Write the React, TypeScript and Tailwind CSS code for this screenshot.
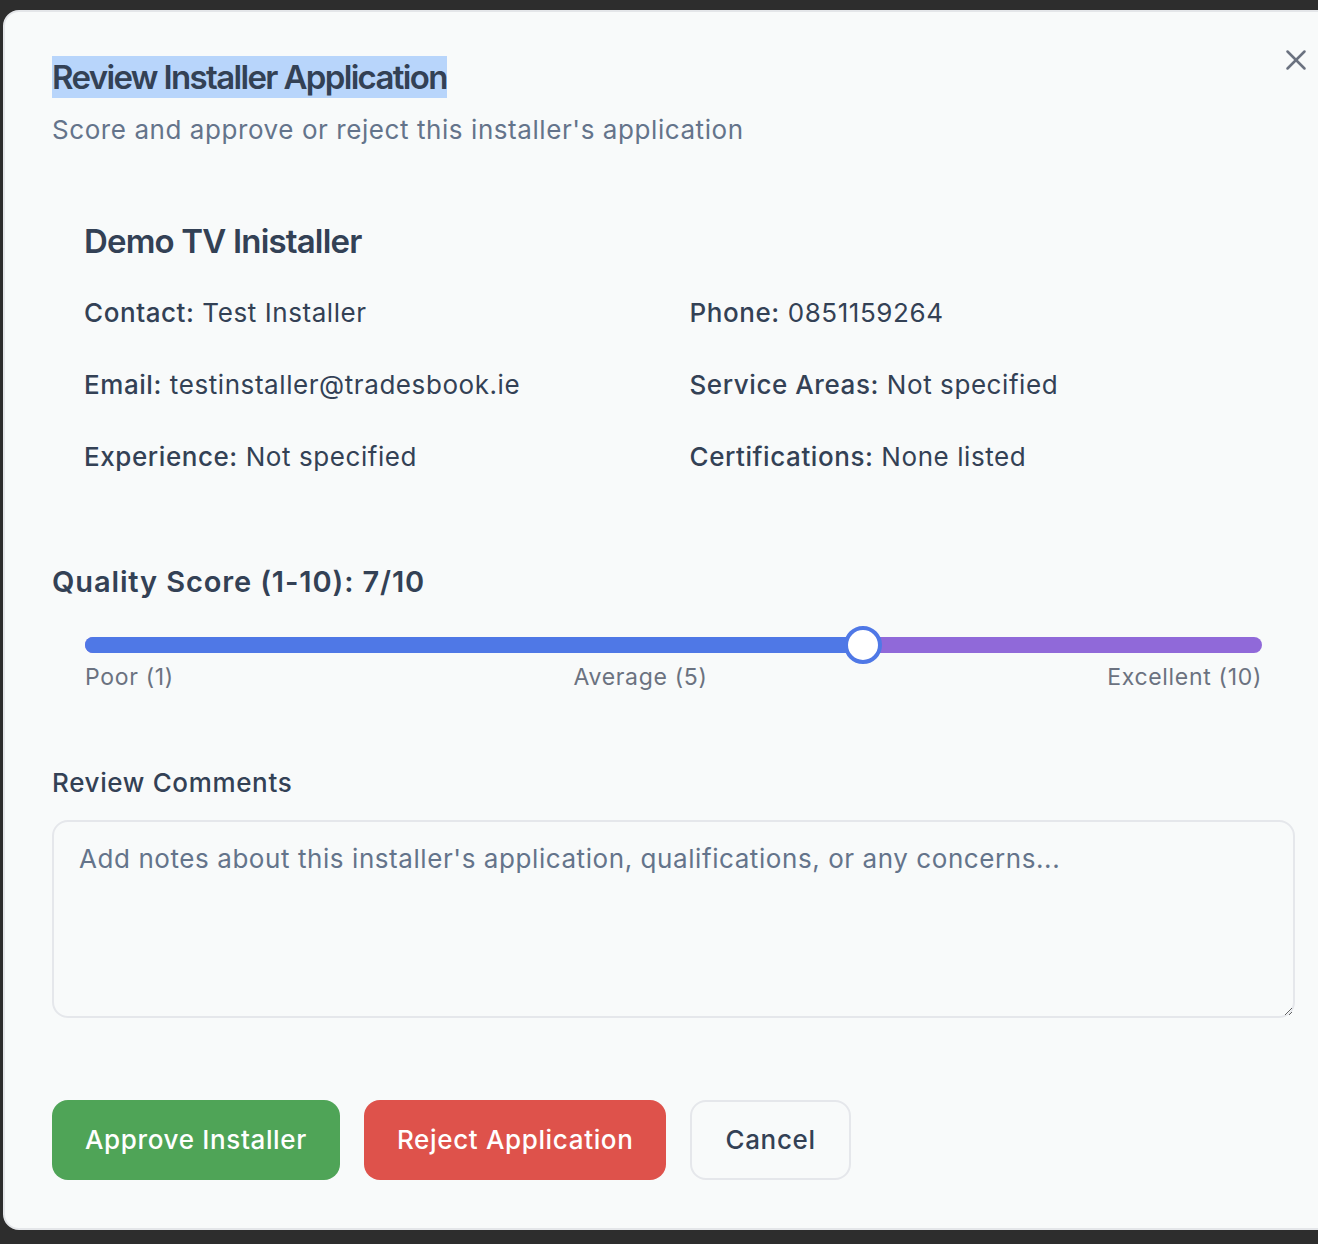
import { X } from "lucide-react";

const details = [
  { label: "Contact:", value: "Test Installer" },
  { label: "Phone:", value: "0851159264" },
  { label: "Email:", value: "testinstaller@tradesbook.ie" },
  { label: "Service Areas:", value: "Not specified" },
  { label: "Experience:", value: "Not specified" },
  { label: "Certifications:", value: "None listed" },
];

const score = 7;

export default function App() {
  const pct = ((score - 1) / 9) * 100;

  return (
    <div className="h-[1244px] overflow-hidden bg-[#2d2d2d] pl-[3px] pt-[10px] font-['Inter',sans-serif] text-[#334155]">
      <div className="relative h-[1220px] w-[1341px] rounded-l-2xl border-2 border-[#e4e6e9] bg-[#f8fafa] px-[47px] pt-[41px]">
        <button className="absolute right-[29px] top-[31px] text-[#6b7280]">
          <X size={34} strokeWidth={1.8} />
        </button>

        <h2 className="text-[33px] font-semibold tracking-[-0.05em]">
          <span className="inline-block bg-[#b8d5fb] leading-[42px]">Review Installer Application</span>
        </h2>
        <p className="mt-[7px] text-[26px] leading-[40px] tracking-[0.022em] text-[#64748b]">
          Score and approve or reject this installer's application
        </p>

        <div className="mt-[38px] rounded-2xl p-[32px]">
          <h3 className="text-[33px] font-semibold leading-[42px] tracking-tight">Demo TV Inistaller</h3>
          <div className="mt-[31px] grid grid-cols-2 gap-x-[32px] gap-y-[32px]">
            {details.map((d) => (
              <div key={d.label} className="text-[26px] leading-[40px] tracking-[0.022em]">
                <span className="font-medium">{d.label}</span> {d.value}
              </div>
            ))}
          </div>
        </div>

        <div className="mt-[53px] text-[29px] font-semibold leading-[40px] tracking-[0.03em]">
          Quality Score (1-10): {score}/10
        </div>

        <div className="px-[33px]">
          <div className="relative mt-[24px] flex h-[38px] items-center">
            <div className="h-[16px] w-full rounded-full bg-[#9069d9]" />
            <div className="absolute inset-y-0 left-[19px] right-[19px]">
              <div className="absolute left-[-19px] top-[11px] h-[16px] rounded-l-full bg-[#4f78e6]" style={{ width: `calc(${pct}% + 19px)` }} />
              <div
                className="absolute top-0 h-[38px] w-[38px] -translate-x-1/2 rounded-full border-[4px] border-[#4f78e6] bg-white"
                style={{ left: `${pct}%` }}
              />
            </div>
          </div>
          <div className="-mt-[2px] flex justify-between text-[23px] leading-[30px] tracking-[0.03em] text-[#6b7280]">
            <span>Poor (1)</span>
            <span>Average (5)</span>
            <span>Excellent (10)</span>
          </div>
        </div>

        <label className="mt-[71px] block text-[26px] font-medium leading-[40px] tracking-[0.025em]">Review Comments</label>
        <textarea
          className="mt-[17px] block h-[198px] w-full rounded-2xl border-2 border-[#e5e7eb] bg-transparent px-[25px] py-[17px] text-[26px] leading-[40px] tracking-[0.022em] placeholder:text-[#64748b] focus:outline-none"
          placeholder="Add notes about this installer's application, qualifications, or any concerns..."
        />

        <div className="mt-[82px] flex gap-[24px]">
          <button className="h-[80px] rounded-2xl bg-[#4fa457] px-[33px] text-[26px] font-medium tracking-[0.025em] text-white">
            Approve Installer
          </button>
          <button className="h-[80px] rounded-2xl bg-[#de524b] px-[33px] text-[26px] font-medium tracking-[0.025em] text-white">
            Reject Application
          </button>
          <button className="h-[80px] rounded-2xl border-2 border-[#e5e7eb] px-[33px] text-[26px] font-medium tracking-[0.025em] text-[#334155]">
            Cancel
          </button>
        </div>
      </div>
    </div>
  );
}
